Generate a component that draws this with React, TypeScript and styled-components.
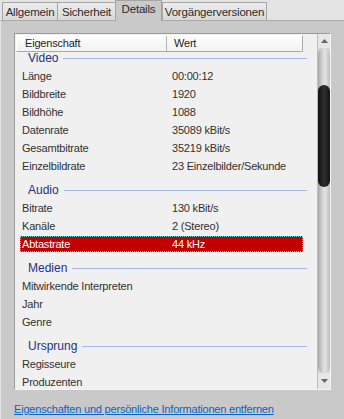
import React from "react";
import styled, { createGlobalStyle } from "styled-components";

const GlobalStyle = createGlobalStyle`
  html, body { margin: 0; padding: 0; }
  body { background: #e4e4e4; font-family: "Liberation Sans", Arial, sans-serif; }
`;

const Window = styled.div`
  width: 344px;
  height: 419px;
  display: flex;
  flex-direction: column;
  overflow: hidden;
  background: #e4e4e4;
  font-size: 11px;
  letter-spacing: -0.2px;
  color: #333;
`;

const TabStrip = styled.div`
  display: flex;
  align-items: flex-end;
  height: 20px;
  padding-left: 2px;
  position: relative;
  z-index: 1;
`;

const Tab = styled.div<{ $active?: boolean; $w: number; $last?: boolean }>`
  box-sizing: border-box;
  width: ${(p) => p.$w}px;
  height: ${(p) => (p.$active ? 21 : 18)}px;
  margin-bottom: ${(p) => (p.$active ? -1 : 0)}px;
  border: 1px solid #a5a5a5;
  border-bottom: none;
  border-right: ${(p) => (p.$active || p.$last ? "1px solid #a5a5a5" : "none")};
  background: ${(p) => (p.$active ? "#c9c9c9" : "linear-gradient(#ececec, #d9d9d9)")};
  color: #2b2b2b;
  font-size: 11.5px;
  line-height: 13px;
  padding-top: ${(p) => (p.$active ? 2 : 3)}px;
  text-align: center;
  white-space: nowrap;
`;

const Panel = styled.div`
  flex: 1;
  display: flex;
  flex-direction: column;
  background: #c9c9c9;
  border-top: 1px solid #a9a9a9;
  border-left: 1px solid #e2e2e2;
  padding: 12px 12px 0 13px;
`;

const ListBox = styled.div`
  box-sizing: border-box;
  width: 317px;
  height: 357px;
  display: flex;
  border: 1px solid;
  border-color: #9c9c9c #f6f6f6 #f6f6f6 #9c9c9c;
`;

const Content = styled.div`
  flex: 1;
  display: flex;
  flex-direction: column;
  background: #f0f0f0;
  padding-top: 1px;
  min-width: 0;
`;

const Header = styled.div`
  box-sizing: border-box;
  width: 287px;
  height: 17px;
  margin-left: 1px;
  display: grid;
  grid-template-columns: 150px 1fr;
  background: linear-gradient(#fdfdfd, #f2f2f2);
  border-top: 1px solid #ffffff;
  border-left: 1px solid #ffffff;
  border-right: 1px solid #a9a9a9;
  border-bottom: 1px solid #a9a9a9;
  color: #1e1e1e;
  line-height: 15px;
`;

const HeaderCell = styled.div<{ $pad: number; $divider?: boolean }>`
  padding-left: ${(p) => p.$pad}px;
  border-right: ${(p) => (p.$divider ? "1px solid #b4b4b4" : "none")};
  white-space: nowrap;
`;

const Body = styled.div`
  flex: 1;
  overflow: hidden;
  padding: 0 10px 0 5px;
`;

const Rows = styled.div`
  display: flex;
  flex-direction: column;
`;

const GroupRow = styled.div`
  height: 24px;
  box-sizing: border-box;
  padding-top: 6px;
  padding-left: 8px;
  display: flex;
  align-items: center;
  flex-shrink: 0;
`;

const GroupTitle = styled.span`
  font-size: 12px;
  letter-spacing: 0;
  line-height: 14px;
  color: #1e3287;
`;

const GroupLine = styled.div`
  flex: 1;
  height: 1px;
  background: #a8b7e0;
  margin-left: 5px;
`;

const Row = styled.div`
  height: 18px;
  box-sizing: border-box;
  padding: 1px 0;
  margin-right: 4px;
  flex-shrink: 0;
`;

const RowInner = styled.div<{ $selected?: boolean }>`
  height: 16px;
  box-sizing: border-box;
  display: grid;
  grid-template-columns: 150px 1fr;
  align-items: center;
  padding-left: 2px;
  background: ${(p) => (p.$selected ? "#c30000" : "transparent")};
  color: ${(p) => (p.$selected ? "#ffffff" : "#303030")};
  outline: ${(p) => (p.$selected ? "1px dotted #6fd3d3" : "none")};
  outline-offset: -1px;
  white-space: nowrap;
`;

const ScrollBar = styled.div`
  width: 13px;
  display: flex;
  flex-direction: column;
  background: #d6d6d6;
  border-left: 1px solid #bdbdbd;
  box-sizing: border-box;
`;

const ArrowButton = styled.div<{ $h: number }>`
  height: ${(p) => p.$h}px;
  display: flex;
  align-items: center;
  justify-content: center;
  background: #e6e6e6;
  flex-shrink: 0;
`;

const Track = styled.div`
  flex: 1;
  border-radius: 6px;
  background: linear-gradient(90deg, #a9a9a9 0%, #d2d2d2 35%, #e4e4e4 60%, #bcbcbc 100%);
  padding-top: 37px;
  box-sizing: border-box;
`;

const Thumb = styled.div`
  height: 102px;
  border-radius: 6px;
  background: linear-gradient(90deg, #111 0%, #2e2e2e 50%, #151515 100%);
`;

const Link = styled.a`
  margin-top: 12px;
  color: #0066cc;
  text-decoration: underline;
  line-height: 15px;
  white-space: nowrap;
  cursor: pointer;
`;

type Item = { name: string; value?: string; selected?: boolean };
type Group = { title: string; items: Item[] };

const groups: Group[] = [
  {
    title: "Video",
    items: [
      { name: "Länge", value: "00:00:12" },
      { name: "Bildbreite", value: "1920" },
      { name: "Bildhöhe", value: "1088" },
      { name: "Datenrate", value: "35089 kBit/s" },
      { name: "Gesamtbitrate", value: "35219 kBit/s" },
      { name: "Einzelbildrate", value: "23 Einzelbilder/Sekunde" },
    ],
  },
  {
    title: "Audio",
    items: [
      { name: "Bitrate", value: "130 kBit/s" },
      { name: "Kanäle", value: "2 (Stereo)" },
      { name: "Abtastrate", value: "44 kHz", selected: true },
    ],
  },
  {
    title: "Medien",
    items: [{ name: "Mitwirkende Interpreten" }, { name: "Jahr" }, { name: "Genre" }],
  },
  {
    title: "Ursprung",
    items: [{ name: "Regisseure" }, { name: "Produzenten" }],
  },
];

const Triangle = ({ up }: { up?: boolean }) => (
  <svg width="7" height="4" viewBox="0 0 7 4">
    <path d={up ? "M0 4 L3.5 0 L7 4 Z" : "M0 0 L3.5 4 L7 0 Z"} fill="#666" />
  </svg>
);

const tabs = [
  { label: "Allgemein", w: 55 },
  { label: "Sicherheit", w: 58 },
  { label: "Details", w: 47, active: true },
  { label: "Vorgängerversionen", w: 105, last: true },
];

export default function App() {
  const scrollOffset = -9;
  return (
    <>
      <GlobalStyle />
      <Window>
        <TabStrip>
          {tabs.map((t) => (
            <Tab key={t.label} $w={t.w} $active={t.active} $last={t.last}>
              {t.label}
            </Tab>
          ))}
        </TabStrip>
        <Panel>
          <ListBox>
            <Content>
              <Header>
                <HeaderCell $pad={8} $divider>
                  Eigenschaft
                </HeaderCell>
                <HeaderCell $pad={7}>Wert</HeaderCell>
              </Header>
              <Body>
                <Rows style={{ marginTop: scrollOffset }}>
                  {groups.map((g) => (
                    <React.Fragment key={g.title}>
                      <GroupRow>
                        <GroupTitle>{g.title}</GroupTitle>
                        <GroupLine />
                      </GroupRow>
                      {g.items.map((it) => (
                        <Row key={it.name}>
                          <RowInner $selected={it.selected}>
                            <span>{it.name}</span>
                            <span>{it.value ?? ""}</span>
                          </RowInner>
                        </Row>
                      ))}
                    </React.Fragment>
                  ))}
                </Rows>
              </Body>
            </Content>
            <ScrollBar>
              <ArrowButton $h={14}>
                <Triangle up />
              </ArrowButton>
              <Track>
                <Thumb />
              </Track>
              <ArrowButton $h={16}>
                <Triangle />
              </ArrowButton>
            </ScrollBar>
          </ListBox>
          <Link>Eigenschaften und persönliche Informationen entfernen</Link>
        </Panel>
      </Window>
    </>
  );
}
